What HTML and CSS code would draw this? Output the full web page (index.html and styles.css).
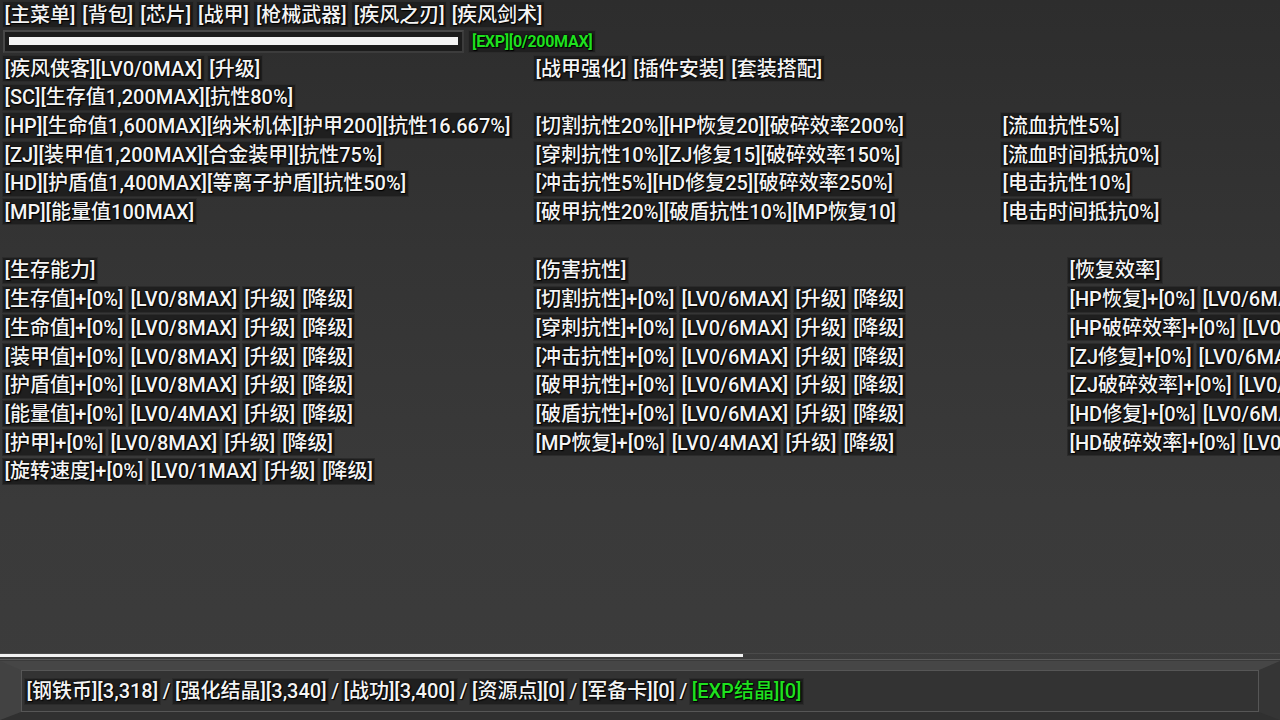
FILE: index.html
```html
<!DOCTYPE html>
<html lang="zh-CN">
<head>
<meta charset="utf-8">
<title>战甲</title>
<link rel="stylesheet" href="styles.css">
</head>
<body>
<div class="page">
  <div class="row menu">
    <span class="b">[主菜单]</span>
    <span class="b">[背包]</span>
    <span class="b">[芯片]</span>
    <span class="b">[战甲]</span>
    <span class="b">[枪械武器]</span>
    <span class="b">[疾风之刃]</span>
    <span class="b">[疾风剑术]</span>
  </div>

  <div class="row exp">
    <div class="expbar"><div class="expfill"></div></div>
    <span class="b green small">[EXP][0/200MAX]</span>
  </div>

  <div class="upper">
    <div class="cell"><span class="b">[疾风侠客][LV0/0MAX]</span><span class="b">[升级]</span></div>
    <div class="cell"><span class="b">[战甲强化]</span><span class="b">[插件安装]</span><span class="b">[套装搭配]</span></div>
    <div class="cell"></div>

    <div class="cell"><span class="b">[SC][生存值1,200MAX][抗性80%]</span></div>
    <div class="cell"></div>
    <div class="cell"></div>

    <div class="cell"><span class="b">[HP][生命值1,600MAX][纳米机体][护甲200][抗性16.667%]</span></div>
    <div class="cell"><span class="b">[切割抗性20%][HP恢复20][破碎效率200%]</span></div>
    <div class="cell"><span class="b">[流血抗性5%]</span></div>

    <div class="cell"><span class="b">[ZJ][装甲值1,200MAX][合金装甲][抗性75%]</span></div>
    <div class="cell"><span class="b">[穿刺抗性10%][ZJ修复15][破碎效率150%]</span></div>
    <div class="cell"><span class="b">[流血时间抵抗0%]</span></div>

    <div class="cell"><span class="b">[HD][护盾值1,400MAX][等离子护盾][抗性50%]</span></div>
    <div class="cell"><span class="b">[冲击抗性5%][HD修复25][破碎效率250%]</span></div>
    <div class="cell"><span class="b">[电击抗性10%]</span></div>

    <div class="cell"><span class="b">[MP][能量值100MAX]</span></div>
    <div class="cell"><span class="b">[破甲抗性20%][破盾抗性10%][MP恢复10]</span></div>
    <div class="cell"><span class="b">[电击时间抵抗0%]</span></div>
  </div>

  <div class="lower">
    <div class="col">
      <div class="cell"><span class="b">[生存能力]</span></div>
      <div class="cell"><span class="b">[生存值]+[0%]</span><span class="b">[LV0/8MAX]</span><span class="b">[升级]</span><span class="b">[降级]</span></div>
      <div class="cell"><span class="b">[生命值]+[0%]</span><span class="b">[LV0/8MAX]</span><span class="b">[升级]</span><span class="b">[降级]</span></div>
      <div class="cell"><span class="b">[装甲值]+[0%]</span><span class="b">[LV0/8MAX]</span><span class="b">[升级]</span><span class="b">[降级]</span></div>
      <div class="cell"><span class="b">[护盾值]+[0%]</span><span class="b">[LV0/8MAX]</span><span class="b">[升级]</span><span class="b">[降级]</span></div>
      <div class="cell"><span class="b">[能量值]+[0%]</span><span class="b">[LV0/4MAX]</span><span class="b">[升级]</span><span class="b">[降级]</span></div>
      <div class="cell"><span class="b">[护甲]+[0%]</span><span class="b">[LV0/8MAX]</span><span class="b">[升级]</span><span class="b">[降级]</span></div>
      <div class="cell"><span class="b">[旋转速度]+[0%]</span><span class="b">[LV0/1MAX]</span><span class="b">[升级]</span><span class="b">[降级]</span></div>
    </div>
    <div class="col">
      <div class="cell"><span class="b">[伤害抗性]</span></div>
      <div class="cell"><span class="b">[切割抗性]+[0%]</span><span class="b">[LV0/6MAX]</span><span class="b">[升级]</span><span class="b">[降级]</span></div>
      <div class="cell"><span class="b">[穿刺抗性]+[0%]</span><span class="b">[LV0/6MAX]</span><span class="b">[升级]</span><span class="b">[降级]</span></div>
      <div class="cell"><span class="b">[冲击抗性]+[0%]</span><span class="b">[LV0/6MAX]</span><span class="b">[升级]</span><span class="b">[降级]</span></div>
      <div class="cell"><span class="b">[破甲抗性]+[0%]</span><span class="b">[LV0/6MAX]</span><span class="b">[升级]</span><span class="b">[降级]</span></div>
      <div class="cell"><span class="b">[破盾抗性]+[0%]</span><span class="b">[LV0/6MAX]</span><span class="b">[升级]</span><span class="b">[降级]</span></div>
      <div class="cell"><span class="b">[MP恢复]+[0%]</span><span class="b">[LV0/4MAX]</span><span class="b">[升级]</span><span class="b">[降级]</span></div>
    </div>
    <div class="col">
      <div class="cell"><span class="b">[恢复效率]</span></div>
      <div class="cell"><span class="b">[HP恢复]+[0%]</span><span class="b">[LV0/6MAX]</span><span class="b">[升级]</span><span class="b">[降级]</span></div>
      <div class="cell"><span class="b">[HP破碎效率]+[0%]</span><span class="b">[LV0/6MAX]</span><span class="b">[升级]</span><span class="b">[降级]</span></div>
      <div class="cell"><span class="b">[ZJ修复]+[0%]</span><span class="b">[LV0/6MAX]</span><span class="b">[升级]</span><span class="b">[降级]</span></div>
      <div class="cell"><span class="b">[ZJ破碎效率]+[0%]</span><span class="b">[LV0/6MAX]</span><span class="b">[升级]</span><span class="b">[降级]</span></div>
      <div class="cell"><span class="b">[HD修复]+[0%]</span><span class="b">[LV0/6MAX]</span><span class="b">[升级]</span><span class="b">[降级]</span></div>
      <div class="cell"><span class="b">[HD破碎效率]+[0%]</span><span class="b">[LV0/6MAX]</span><span class="b">[升级]</span><span class="b">[降级]</span></div>
    </div>
  </div>

  <div class="spacer"></div>

  <div class="track"><div class="trackfill"></div></div>

  <div class="footer">
    <div class="frame">
      <div class="panel">
        <span class="b">[钢铁币][3,318]</span><span class="sep">/</span>
        <span class="b">[强化结晶][3,340]</span><span class="sep">/</span>
        <span class="b">[战功][3,400]</span><span class="sep">/</span>
        <span class="b">[资源点][0]</span><span class="sep">/</span>
        <span class="b">[军备卡][0]</span><span class="sep">/</span>
        <span class="b green">[EXP结晶][0]</span>
      </div>
    </div>
  </div>
</div>
</body>
</html>
```

FILE: styles.css
```css
* { box-sizing: border-box; }

html, body {
  margin: 0;
  padding: 0;
  width: 1280px;
  height: 720px;
  overflow: hidden;
}

body {
  background: linear-gradient(to bottom, #2d2d2d 0%, #343434 35%, #3a3a3a 70%, #3c3c3c 100%);
  font-family: Roboto, "Noto Sans CJK SC", sans-serif;
  font-weight: 500;
  font-size: 20px;
  color: #f4f4f4;
}

.page {
  height: 720px;
  display: flex;
  flex-direction: column;
  padding-top: 1px;
}

.row {
  display: flex;
  gap: 2px;
  padding-left: 2px;
}

.b {
  display: inline-flex;
  align-items: center;
  height: 27px;
  padding: 0 1.5px;
  background: #1f1f1f;
  border: 1px solid #2b2b2b;
  white-space: nowrap;
  line-height: 1;
  text-shadow: 0 0 2px #000, 1px 1px 1px #000, 0 0 1px #000;
  flex: none;
}

.green { color: #1fe01f; }

.small {
  font-size: 16px;
  font-weight: 700;
  letter-spacing: -0.3px;
  height: 23px;
  padding: 0 3px;
}

.exp {
  margin-top: 2px;
  align-items: stretch;
  gap: 4px;
  padding-left: 3px;
}

.expbar {
  width: 461px;
  height: 23px;
  background: #1c1c1c;
  border: 2px solid #484848;
  border-right-color: #3c3c3c;
  border-bottom-color: #3c3c3c;
  padding: 5px 4px 0 4px;
}

.expfill {
  height: 8px;
  width: 100%;
  background: #f4f4f4;
}

.upper {
  margin-top: 2px;
  display: grid;
  grid-template-columns: 531px 467px 1fr;
  grid-auto-rows: 27px;
  row-gap: 1.7px;
  padding-left: 2px;
}

.cell {
  display: flex;
  gap: 2px;
}

.lower {
  margin-top: 31.5px;
  display: grid;
  grid-template-columns: 531px 534px 1fr;
  padding-left: 2px;
  overflow: hidden;
}

.col {
  display: flex;
  flex-direction: column;
  gap: 1.7px;
  min-width: 0;
}

.spacer { flex: 1; }

.track {
  height: 6px;
  border-top: 1px solid #4a4a4a;
}

.trackfill {
  width: 743px;
  height: 3px;
  background: #f2f2f2;
}

.footer {
  height: 61px;
  border-top: 1px solid #5a5a5a;
  background: #3a3a3a;
  padding-top: 1px;
}

.frame {
  height: 100%;
  border-style: solid;
  border-width: 9px 21px 8px 21px;
  border-color: #464646 #353535 #303030 #424242;
  box-shadow: inset 0 0 0 1px #4e4e4e;
}

.panel {
  height: 100%;
  border: 1px solid #565656;
  background: #333333;
  display: flex;
  align-items: center;
  padding-left: 2px;
}

.sep {
  margin: 0 2px;
  text-shadow: 0 0 2px #000, 1px 1px 1px #000;
}
```
